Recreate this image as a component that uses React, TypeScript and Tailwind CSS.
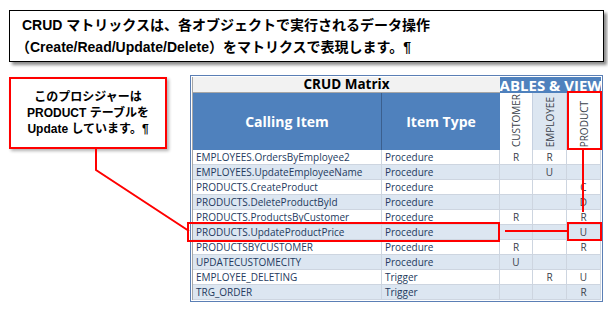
type Mark = "" | "R" | "U" | "C" | "D";

interface Row {
  name: string;
  kind: string;
  customer: Mark;
  employee: Mark;
  product: Mark;
}

const rows: Row[] = [
  { name: "EMPLOYEES.OrdersByEmployee2", kind: "Procedure", customer: "R", employee: "R", product: "" },
  { name: "EMPLOYEES.UpdateEmployeeName", kind: "Procedure", customer: "", employee: "U", product: "" },
  { name: "PRODUCTS.CreateProduct", kind: "Procedure", customer: "", employee: "", product: "C" },
  { name: "PRODUCTS.DeleteProductById", kind: "Procedure", customer: "", employee: "", product: "D" },
  { name: "PRODUCTS.ProductsByCustomer", kind: "Procedure", customer: "R", employee: "", product: "R" },
  { name: "PRODUCTS.UpdateProductPrice", kind: "Procedure", customer: "", employee: "", product: "U" },
  { name: "PRODUCTSBYCUSTOMER", kind: "Procedure", customer: "R", employee: "", product: "R" },
  { name: "UPDATECUSTOMECITY", kind: "Procedure", customer: "U", employee: "", product: "" },
  { name: "EMPLOYEE_DELETING", kind: "Trigger", customer: "", employee: "R", product: "U" },
  { name: "TRG_ORDER", kind: "Trigger", customer: "", employee: "", product: "R" },
];

const jp = { fontFamily: '"Liberation Sans", "Noto Sans CJK JP", sans-serif' };
const xl = { fontFamily: '"Open Sans", "Liberation Sans", sans-serif' };

function VHead({ label, shaded }: { label: string; shaded?: boolean }) {
  return (
    <div
      className={`flex items-end justify-center border-r border-[#c5d0e0] pb-[3px] ${
        shaded ? "bg-[#dce6f1]" : "bg-white"
      }`}
    >
      <span className="[writing-mode:vertical-rl] rotate-180 text-[10px] leading-none text-[#3a3f4a]">
        {label}
      </span>
    </div>
  );
}

function Cell({ v, bg }: { v: Mark; bg: string }) {
  return (
    <div className={`${bg} flex items-center justify-center border-r border-b border-[#cdd5e0] text-[10px] text-[#3a3f4a]`}>
      {v}
    </div>
  );
}

export default function App() {
  return (
    <div className="relative w-[608px] h-[309px] overflow-hidden bg-white">
      {/* intro box */}
      <div
        style={jp}
        className="ml-[9px] mt-[10px] w-[595px] h-[52px] border-[1.5px] border-black bg-white px-[12px] py-[3px] text-[14px] font-bold leading-[22px] text-black shadow-[3px_3px_3px_rgba(0,0,0,0.45)]"
      >
        <p className="whitespace-nowrap">CRUD マトリックスは、各オブジェクトで実行されるデータ操作</p>
        <p className="-ml-[6px] whitespace-nowrap">（Create/Read/Update/Delete）をマトリクスで表現します。¶</p>
      </div>

      <div className="flex mt-[13px]">
        {/* callout */}
        <div
          style={jp}
          className="ml-[9px] mt-[2px] w-[158px] h-[72px] border-2 border-[#ff0000] bg-white flex flex-col items-center justify-center text-[12px] font-bold leading-[16px] text-black shadow-[2px_2px_3px_rgba(0,0,0,0.3)]"
        >
          <p>このプロシジャーは</p>
          <p>PRODUCT テーブルを</p>
          <p>Update しています。¶</p>
        </div>

        {/* matrix */}
        <div className="ml-[23px] w-[413px] h-[227px] border border-[#5b7fb5] bg-white p-[1px]">
          <div
            style={xl}
            className="grid grid-cols-[189px_118px_33px_34px_34px] grid-rows-[16px_57px_repeat(10,15px)] border-l border-[#a6a6a6]"
          >
            <div className="col-span-2 bg-[#f2f2f2] border-b border-[#a6a6a6] flex items-center justify-center text-[13.5px] font-bold text-black">
              CRUD Matrix
            </div>
            <div className="col-span-3 bg-[#4f81bd] overflow-hidden flex items-center justify-center">
              <span className="whitespace-nowrap text-[15px] font-bold text-white">TABLES &amp; VIEWS</span>
            </div>

            <div className="bg-[#4f81bd] border-r border-[#3b5f8e] flex items-center justify-center text-[14px] font-bold text-white">
              Calling Item
            </div>
            <div className="bg-[#4f81bd] flex items-center justify-center text-[14px] font-bold text-white">
              Item Type
            </div>
            <VHead label="CUSTOMER" />
            <VHead label="EMPLOYEE" shaded />
            <VHead label="PRODUCT" />

            {rows.map((r, i) => {
              const bg = i % 2 === 0 ? "bg-white" : "bg-[#dce6f1]";
              return (
                <div key={r.name} className="contents">
                  <div className={`${bg} flex items-center border-r border-b border-[#cdd5e0] pl-[3px] text-[10px] text-[#243a5e] whitespace-nowrap`}>
                    {r.name}
                  </div>
                  <div className={`${bg} flex items-center border-r border-b border-[#cdd5e0] pl-[3px] text-[10px] text-[#243a5e]`}>
                    {r.kind}
                  </div>
                  <Cell v={r.customer} bg={bg} />
                  <Cell v={r.employee} bg={bg} />
                  <Cell v={r.product} bg={bg} />
                </div>
              );
            })}
          </div>
        </div>
      </div>

      {/* red annotations */}
      <svg className="absolute inset-0 pointer-events-none" width="608" height="309" viewBox="0 0 608 309">
        <polyline points="96,149 96,170 189,231" fill="none" stroke="#ff0000" strokeWidth="2" />
        <rect x="188" y="223" width="311" height="18" fill="none" stroke="#ff0000" strokeWidth="2" />
        <rect x="568" y="92" width="33" height="57" fill="none" stroke="#ff0000" strokeWidth="2" />
        <rect x="568" y="223" width="33" height="17" fill="none" stroke="#ff0000" strokeWidth="2" />
        <line x1="583" y1="149" x2="583" y2="212" stroke="#ff0000" strokeWidth="2" />
        <line x1="505" y1="231" x2="567" y2="231" stroke="#ff0000" strokeWidth="2" />
      </svg>
    </div>
  );
}
